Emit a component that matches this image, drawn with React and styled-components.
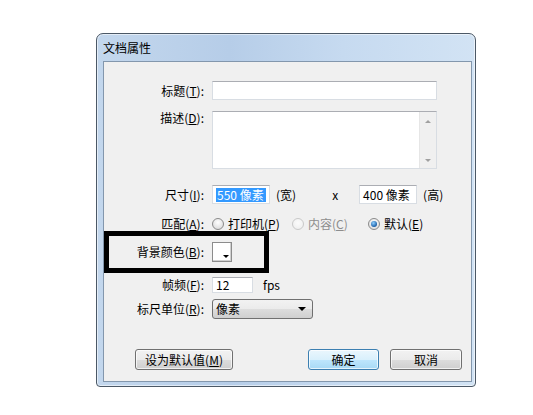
import React from 'react'
import styled, { createGlobalStyle, css } from 'styled-components'

const GlobalStyle = createGlobalStyle`
  body {
    margin: 0;
    background: #fff;
    font-family: "Noto Sans CJK SC", "Liberation Sans", sans-serif;
    font-size: 12px;
    color: #000;
  }
`

const Page = styled.div`
  padding: 33px 0 0 96px;
`

const Window = styled.div`
  box-sizing: border-box;
  width: 380px;
  height: 354px;
  border: 1px solid #4b5866;
  border-radius: 7px 7px 4px 4px;
  background: linear-gradient(90deg, #c3d7ed 0%, #b6cde8 35%, #c6daf0 65%, #d2e3f4 100%);
  box-shadow: inset 0 0 0 1px rgba(255, 255, 255, 0.55);
  display: flex;
  flex-direction: column;
`

const TitleBar = styled.div`
  height: 27px;
  padding-left: 6px;
  display: flex;
  align-items: center;
  font-size: 12px;
  line-height: 14px;
`

const Panel = styled.div`
  flex: 1;
  margin: 0 3px 4px 6px;
  border: 1px solid #8397ad;
  background: #f0f0f0;
  display: flex;
  flex-direction: column;
  padding-top: 19px;
`

const Row = styled.div`
  display: grid;
  grid-template-columns: ${p => p.$label || 100}px auto;
  column-gap: 8px;
  align-items: ${p => (p.$top ? 'start' : 'center')};
  margin-top: ${p => p.$mt || 0}px;
  height: ${p => p.$h}px;
  ${p =>
    p.$boxed &&
    css`
      box-sizing: border-box;
      width: 165px;
      border: 5px solid #000;
    `}
`

const Label = styled.div`
  text-align: right;
  line-height: 14px;
  white-space: nowrap;
`

const Key = styled.span`
  text-decoration: underline;
  text-underline-offset: 1px;
`

const Controls = styled.div`
  display: flex;
  align-items: center;
`

const Field = styled.div`
  box-sizing: border-box;
  width: ${p => p.$w}px;
  height: ${p => p.$h || 19}px;
  margin-left: ${p => p.$ml || 0}px;
  border: 1px solid #d8dde3;
  border-top-color: #abadb3;
  background: #fff;
  padding-left: 3px;
  display: flex;
  align-items: center;
  line-height: 14px;
  white-space: nowrap;
`

const Selected = styled.span`
  background: #3399ff;
  color: #fff;
  padding: 0 2px 0 1px;
`

const TextArea = styled.div`
  box-sizing: border-box;
  width: 225px;
  height: 58px;
  border: 1px solid #d8dde3;
  border-top-color: #abadb3;
  background: #fff;
  display: flex;
  justify-content: flex-end;
`

const ScrollTrack = styled.div`
  width: 16px;
  background: #f0f0f0;
  border-left: 1px solid #e6e6e6;
  display: flex;
  flex-direction: column;
  justify-content: space-between;
  align-items: center;
  padding: 8px 0 6px;
`

const Arrow = styled.div`
  width: 0;
  height: 0;
  border-left: ${p => p.$size || 3}px solid transparent;
  border-right: ${p => p.$size || 3}px solid transparent;
  ${p =>
    p.$up
      ? css`border-bottom: 3px solid ${p.$color || '#a0a0a0'};`
      : css`border-top: ${p.$size || 3}px solid ${p.$color || '#a0a0a0'};`}
`

const Option = styled.div`
  width: ${p => p.$w}px;
  flex-shrink: 0;
  display: flex;
  align-items: center;
`

const Text = styled.span`
  margin-left: ${p => p.$ml || 0}px;
  line-height: 14px;
  color: ${p => (p.$disabled ? '#8d8d8d' : '#000')};
  white-space: nowrap;
`

const Radio = styled.span`
  box-sizing: border-box;
  flex-shrink: 0;
  width: 12px;
  height: 12px;
  border-radius: 50%;
  margin-right: 4px;
  border: 1px solid ${p => (p.$disabled ? '#c9c9c9' : '#8a8a8a')};
  background: ${p =>
    p.$disabled
      ? 'radial-gradient(circle at 50% 40%, #fbfbfb, #ececec)'
      : 'radial-gradient(circle at 50% 35%, #ffffff, #d4d4d4)'};
  display: flex;
  align-items: center;
  justify-content: center;
  &::after {
    content: '';
    display: ${p => (p.$checked ? 'block' : 'none')};
    width: 6px;
    height: 6px;
    border-radius: 50%;
    background: radial-gradient(circle at 40% 35%, #8fd0ff, #1a5fa8 70%, #0d3a73);
  }
`

const Swatch = styled.div`
  box-sizing: border-box;
  width: 20px;
  height: 20px;
  border: 1px solid #8c8c8c;
  background: #fff;
  box-shadow: inset -1px -1px 0 #d0d0d0;
  display: flex;
  align-items: flex-end;
  justify-content: flex-end;
  padding: 0 2px 3px 0;
`

const Select = styled.div`
  box-sizing: border-box;
  width: 101px;
  height: 20px;
  border: 1px solid #707070;
  border-radius: 3px;
  background: linear-gradient(#f2f2f2 0%, #ebebeb 50%, #dddddd 51%, #cfcfcf 100%);
  display: flex;
  align-items: center;
  justify-content: space-between;
  padding: 0 6px 0 3px;
  line-height: 14px;
`

const ButtonRow = styled.div`
  display: flex;
  margin-top: 30px;
  padding: 0 9px 0 31px;
  gap: 11px;
`

const Button = styled.div`
  box-sizing: border-box;
  width: ${p => p.$w}px;
  height: 21px;
  border: 1px solid ${p => (p.$focus ? '#3c7fb1' : '#707070')};
  border-radius: 3px;
  background: ${p =>
    p.$focus
      ? 'linear-gradient(#eaf6fd 0%, #d9f0fc 50%, #bee6fd 51%, #a7d9f5 100%)'
      : 'linear-gradient(#f2f2f2 0%, #ebebeb 50%, #dddddd 51%, #cfcfcf 100%)'};
  box-shadow: inset 0 0 0 1px rgba(255, 255, 255, 0.7);
  display: flex;
  align-items: center;
  justify-content: center;
  line-height: 14px;
  margin-right: ${p => (p.$push ? 'auto' : '0')};
`

export default function App() {
  return (
    <>
      <GlobalStyle />
      <Page>
        <Window>
          <TitleBar>文档属性</TitleBar>
          <Panel>
            <Row $h={19}>
              <Label>标题(<Key>T</Key>):</Label>
              <Field $w={225} />
            </Row>

            <Row $top $mt={11} $h={58}>
              <Label>描述(<Key>D</Key>):</Label>
              <TextArea>
                <ScrollTrack>
                  <Arrow $up />
                  <Arrow />
                </ScrollTrack>
              </TextArea>
            </Row>

            <Row $mt={16} $h={19}>
              <Label>尺寸(<Key>I</Key>):</Label>
              <Controls>
                <Field $w={58}>
                  <Selected>550 像素</Selected>
                </Field>
                <Text $ml={6}>(宽)</Text>
                <Text $ml={36}>x</Text>
                <Field $w={58} $ml={21}>400 像素</Field>
                <Text $ml={6}>(高)</Text>
              </Controls>
            </Row>

            <Row $mt={12} $h={15}>
              <Label>匹配(<Key>A</Key>):</Label>
              <Controls>
                <Option $w={80}>
                  <Radio />
                  <Text>打印机(<Key>P</Key>)</Text>
                </Option>
                <Option $w={76}>
                  <Radio $disabled />
                  <Text $disabled>内容(<Key>C</Key>)</Text>
                </Option>
                <Option $w={60}>
                  <Radio $checked />
                  <Text>默认(<Key>E</Key>)</Text>
                </Option>
              </Controls>
            </Row>

            <Row $boxed $label={95} $h={42}>
              <Label>背景颜色(<Key>B</Key>):</Label>
              <Swatch>
                <Arrow $color="#000" $size={3} />
              </Swatch>
            </Row>

            <Row $mt={4} $h={16}>
              <Label>帧频(<Key>F</Key>):</Label>
              <Controls>
                <Field $w={41} $h={16}>12</Field>
                <Text $ml={10}>fps</Text>
              </Controls>
            </Row>

            <Row $mt={6} $h={20}>
              <Label>标尺单位(<Key>R</Key>):</Label>
              <Select>
                <span>像素</span>
                <Arrow $color="#000" $size={4} />
              </Select>
            </Row>

            <ButtonRow>
              <Button $w={98} $push>
                设为默认值(<Key>M</Key>)
              </Button>
              <Button $w={71} $focus>确定</Button>
              <Button $w={72}>取消</Button>
            </ButtonRow>
          </Panel>
        </Window>
      </Page>
    </>
  )
}
